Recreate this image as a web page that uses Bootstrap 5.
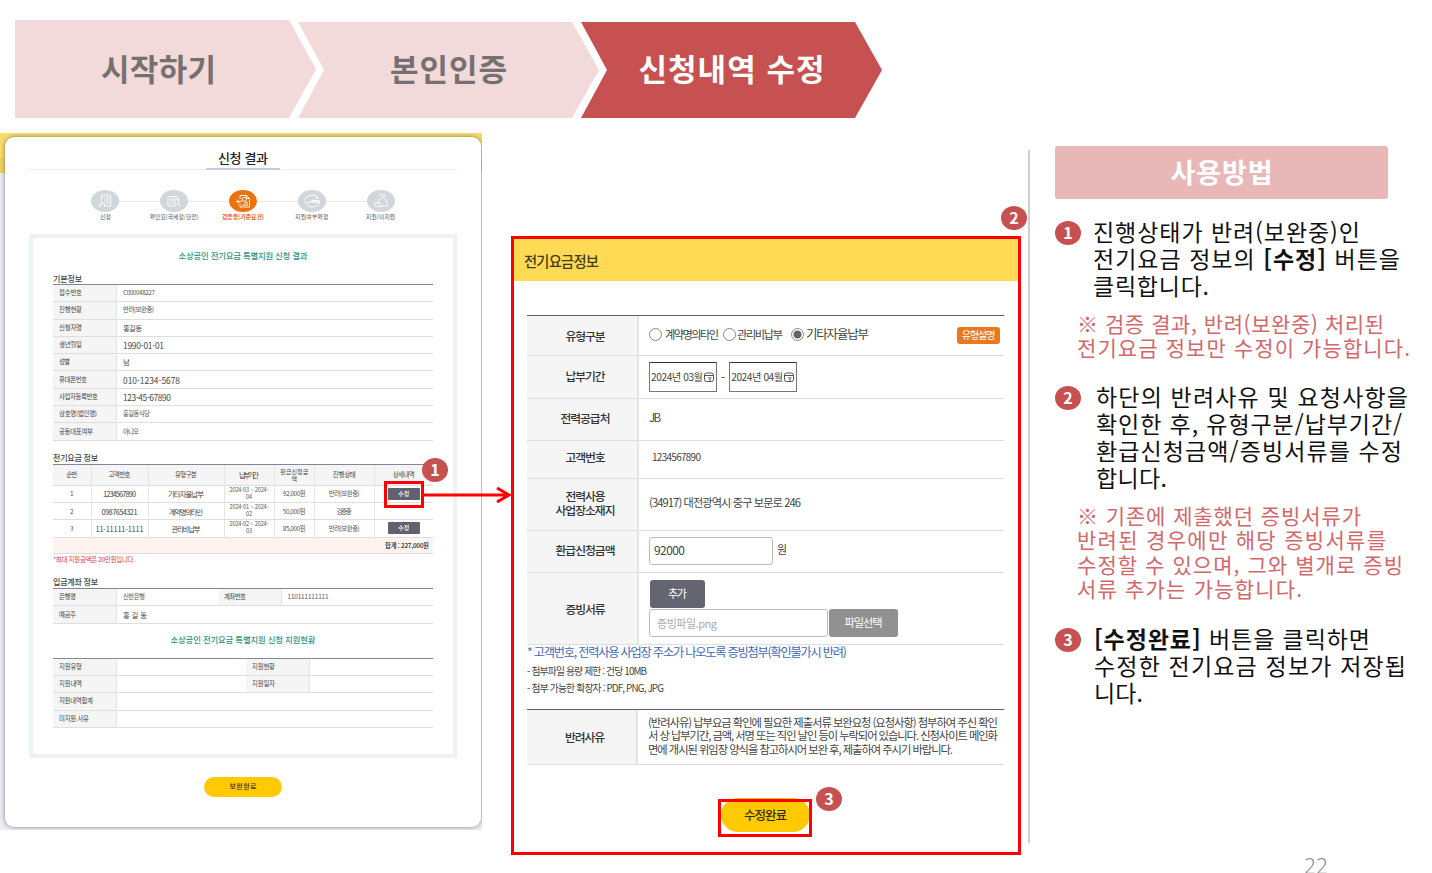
<!DOCTYPE html>
<html lang="ko">
<head>
  <meta charset="UTF-8" />
  <meta name="viewport" content="width=device-width, initial-scale=1" />
  <title>신청내역 수정</title>
  <link rel="stylesheet" href="https://cdn.jsdelivr.net/npm/bootstrap@5.3.3/dist/css/bootstrap.min.css" />
  <style>
    body {
      width: 1432px;
      height: 873px;
      overflow: hidden;
      background: #fff;
      color: #333;
      font-family: "Noto Sans CJK KR", sans-serif;
    }

    [data-w] {
      display: inline-block;
      white-space: nowrap;
    }

    /* top arrows */
    .flow-bar { height: 133px; padding: 20px 0 0 15px; }
    .flow-step {
      width: 301px;
      height: 96px;
      margin: 2px 0 0 -18px;
      padding-bottom: 4px;
      background: #f2dada;
      color: #767170;
      font-size: 31px;
      font-weight: 700;
      clip-path: polygon(0 0, 274px 0, 100% 50%, 274px 100%, 0 100%, 26px 50%);
    }
    .flow-step:first-child {
      height: 98px;
      margin: 0;
      padding-bottom: 2px;
      clip-path: polygon(0 0, 274px 0, 100% 50%, 274px 100%, 0 100%);
    }
    .flow-step.current { background: #c65150; color: #fff; }

    /* left window */
    .result-shot {
      width: 482px;
      height: 697px;
      padding: 4px 1px 0 5px;
      overflow: hidden;
      background: linear-gradient(#f9dc6a 0 25px, #efd05c 25px 40px, #ececf2 40px);
    }
    .result-card {
      height: 690px;
      padding: 0 24px;
      border-radius: 9px;
      background: #fff;
      box-shadow: 0 0 4px rgba(70, 60, 90, .65);
      font-size: 6.4px;
      line-height: 8px;
      color: #555;
    }
    .result-title {
      height: 33px;
      padding-top: 11px;
      border-bottom: 1px solid #eee;
      font-size: 13px;
      line-height: 19px;
      font-weight: 500;
      color: #222;
    }
    .result-title span { border-bottom: 2px solid #c3cddb; padding: 0 12px 1px; line-height: 20px; }
    .progress-steps { margin: 20px 42px 0 42px; position: relative; }
    .progress-steps::before {
      content: "";
      position: absolute;
      left: 34px;
      right: 34px;
      top: 11px;
      height: 1px;
      background: #e6e8ea;
    }
    .progress-item { flex: 1 1 0; position: relative; font-size: 5.8px; line-height: 7px; white-space: nowrap; }
    .progress-item svg { display: block; margin: 0 auto 1px; }
    .progress-item.on { color: #ed5a24; font-weight: 700; }
    .result-frame {
      height: 524px;
      margin-top: 14px;
      padding: 11px 20px 0;
      border: 4px solid #edf1f8;
    }
    .green-title { font-size: 8.4px; line-height: 12px; font-weight: 500; color: #2e9485; }
    .part-title { font-size: 8px; line-height: 11px; font-weight: 500; color: #444; }

    .grid-table {
      table-layout: fixed;
      border-collapse: separate;
      border-spacing: 0;
      margin: 0;
      border-top: 1.5px solid #85859a;
      color: #555;
    }
    .grid-table td, .grid-table th {
      padding: 0 0 0 6px;
      border-bottom: 1px solid #dedede;
      font-weight: 400;
      vertical-align: middle;
      box-shadow: none;
      background: none;
    }
    .grid-table th { background: #f5f5f5; border-right: 1px solid #e4e4e4; color: #444; }
    .grid-table tr { height: 17.3px; }
    .list-table td, .list-table th { padding: 0; text-align: center; border-right: 1px solid #e4e4e4; line-height: 7px; }
    .list-table td:last-child, .list-table th:last-child { border-right: 0; }
    .list-table .head-row { height: 21px; }
    .list-table .sum-row { height: 16.5px; }
    .list-table .sum-row td { background: #fff3f0; text-align: right; padding-right: 4px; color: #222; font-weight: 500; }
    .list-table .two-line { font-size: 6px; line-height: 7px; }
    .list-table .date-cell { font-size: 5.6px; line-height: 7px; }
    .grid-table .t8 { font-size: 8.4px; color: #444; }
    .grid-table .t7 { font-size: 7.4px; color: #444; }
    .btn-edit {
      display: block;
      width: 32px;
      height: 12px;
      margin: 0 auto;
      border-radius: 1px;
      background: #62626e;
      color: #fff;
      font-size: 6px;
      line-height: 12px;
      font-weight: 500;
    }
    .btn-yellow { border-radius: 50rem; background: #ffca04; color: #332c10; }

    /* centre form */
    .form-shot {
      width: 510px;
      height: 619px;
      margin: 103px 0 0 29px;
      border: 3px solid #f00;
      background: #fff;
      position: relative;
      font-size: 12px;
    }
    .form-head { height: 42px; padding-left: 10px; line-height: 44px; background: #ffdb55; color: #443c1c; font-size: 14.3px; font-weight: 500; }
    .form-inner { padding: 34px 14px 0 13px; }
    .form-grid { line-height: 14px; border-top-color: #5c5c78; color: #444; }
    .form-grid th { padding: 0 0 3px 7px; text-align: center; font-weight: 500; border-right-width: 2px; color: #333; font-size: 11.8px; }
    .form-grid td { padding-left: 10px; padding-bottom: 1px; }
    .radio-dot { width: 13px; height: 13px; border: 1px solid #888; border-radius: 50%; flex: none; }
    .radio-dot.on { background: radial-gradient(#666 0 3.6px, #fff 4.4px); }
    .month-box { width: 68px; height: 30px; border: 1px solid #777; border-top-color: #333; font-size: 10.2px; padding: 0 2px 0 1px; }
    .btn-type { background: #e8791f; color: #fff; width: 43px; height: 17px; border-radius: 3px; line-height: 16px; font-size: 10.4px; position: relative; top: 1px; }
    .in-box { border: 1px solid #bbb; border-radius: 3px; height: 28px; line-height: 24px; background: #fff; }
    .btn-dark-sm { width: 55px; height: 28px; line-height: 27px; border-radius: 3px; background: #656572; color: #fff; font-size: 11px; }
    .btn-file { width: 69px; height: 28px; line-height: 26px; border-radius: 3px; background: #919191; color: #fff; font-size: 11.2px; }
    .note-blue { font-size: 12.2px; line-height: 14px; color: #4169b8; }
    .note-line { font-size: 9.8px; line-height: 17px; color: #444; }

    /* guide column */
    .guide { width: 404px; margin: 17px 0 0 7px; padding-left: 25px; border-left: 2px solid #d0d0d0; height: 693px; }
    .guide-head { width: 333px; height: 53px; margin-top: -4px; border-radius: 3px; background: #e8b7b7; color: #fff; font-size: 27px; line-height: 51px; font-weight: 700; }
    .guide-item { font-size: 23px; line-height: 27px; color: #111; }
    .guide-item b { font-weight: 700; }
    .guide-item .num-badge { margin-top: 3px; }
    .guide-note { padding-left: 22px; font-size: 21px; line-height: 24.4px; color: #d2686a; }
    .num-badge {
      width: 26px;
      height: 24px;
      border-radius: 50%;
      background: #c65150;
      color: #fff;
      font-size: 16px;
      line-height: 23px;
      font-weight: 700;
      text-align: center;
      flex: none;
    }

    /* callouts drawn over the two windows */
    .over { position: absolute; z-index: 3; }
    .red-box { border: 3px solid #f00; }
    .page-no { position: absolute; left: 1304px; top: 854px; font: 300 21px/24px "Noto Sans", sans-serif; color: #8b8b8b; }
  </style>
</head>
<body>
  <header class="flow-bar d-flex align-items-start">
    <div class="flow-step d-flex align-items-center justify-content-center"><span data-w="115" style="margin-right:14px">시작하기</span></div>
    <div class="flow-step d-flex align-items-center justify-content-center"><span data-w="117">본인인증</span></div>
    <div class="flow-step current d-flex align-items-center justify-content-center"><span data-w="186">신청내역 수정</span></div>
  </header>

  <main class="d-flex align-items-start position-relative">
    <section class="result-shot">
      <div class="result-card">
        <div class="result-title text-center"><span><i class="fst-normal" data-w="50">신청 결과</i></span></div>

        <div class="progress-steps d-flex text-center">
          <div class="progress-item">
            <svg width="28" height="22" viewBox="0 0 28 22"><ellipse cx="14" cy="11" rx="14" ry="11" fill="#d1d6da"/><g fill="none" stroke="#fff" stroke-width=".9"><path d="M10.500 11V5h9v11h-5.500M12 7.500h1.500M15 7.500h3M13 10h5M15 12.500h3M8.500 17.500v-3.500l2-1.500 3 1v3.500M10.500 12.500v3"/></g></svg>
            <span data-w="11">신청</span>
          </div>
          <div class="progress-item">
            <svg width="28" height="22" viewBox="0 0 28 22"><ellipse cx="14" cy="11" rx="14" ry="11" fill="#d1d6da"/><g fill="none" stroke="#fff" stroke-width=".9"><path d="M16 16H8V6.500h9l1.500 1.500v2M10 9h5.500M10 11h3.500M10 13.500h3"/><circle cx="16.500" cy="12" r="2.500"/><path d="M18.300 14l2.700 2.500"/></g></svg>
            <span data-w="49">확인요(국세청/한전)</span>
          </div>
          <div class="progress-item on">
            <svg width="28" height="22" viewBox="0 0 28 22"><ellipse cx="14" cy="11" rx="14" ry="11" fill="#ec720f"/><g fill="none" stroke="#fff" stroke-width=".9"><path d="M11 9V5.500h6.500l3 3v8.500H11v-3.500M17.500 5.500v3h3M13 15h6M15 13h4"/><circle cx="15.200" cy="9.300" r="2"/><path d="M16.500 11l1.500 1.500M13.500 10.500l-3 1.500M7 11.500h4M9 9.700v3.600"/></g></svg>
            <span data-w="42">검증중(기준요건)</span>
          </div>
          <div class="progress-item">
            <svg width="28" height="22" viewBox="0 0 28 22"><ellipse cx="14" cy="11" rx="14" ry="11" fill="#d1d6da"/><g fill="none" stroke="#fff" stroke-width="1"><path d="M6.500 10.500c1.500-6 11.500-7 14-2.500h-3M21.500 12.500c-1 5-10.500 6-13.500 1.500M6.500 12.500h5l2-2h8v1.500h-8M13.500 12.500h7"/></g></svg>
            <span data-w="33">지원여부확정</span>
          </div>
          <div class="progress-item">
            <svg width="28" height="22" viewBox="0 0 28 22"><ellipse cx="14" cy="11" rx="14" ry="11" fill="#d1d6da"/><g fill="none" stroke="#fff" stroke-width=".9"><path d="M13 5h5l-1.500 2.500c2.500 2 5 6.500 3.500 8.500h-7M14.500 7.500c-2 1.500-3 3.500-3 5.500M14 7.500h3M7 13.500l3-1 4 2M7 15.500l4 1h4"/></g></svg>
            <span data-w="29">지원/미지원</span>
          </div>
        </div>

        <div class="result-frame">
          <div class="green-title text-center"><span data-w="129">소상공인 전기요금 특별지원 신청 결과</span></div>

          <div class="part-title" style="margin-top:12px"><span data-w="29">기본정보</span></div>
          <table class="table grid-table">
            <colgroup><col style="width:64px" /><col /></colgroup>
            <tr><th><span data-w="23">접수번호</span></th><td><span data-w="32">C000048227</span></td></tr>
            <tr><th><span data-w="23">진행현황</span></th><td><span data-w="31">반려(보완중)</span></td></tr>
            <tr><th><span data-w="23">신청자명</span></th><td class="t7"><span data-w="19">홍길동</span></td></tr>
            <tr><th><span data-w="23">생년월일</span></th><td class="t8"><span data-w="41">1990-01-01</span></td></tr>
            <tr><th><span data-w="11">성별</span></th><td class="t7">남</td></tr>
            <tr><th><span data-w="28">휴대폰번호</span></th><td class="t8"><span data-w="57">010-1234-5678</span></td></tr>
            <tr><th><span data-w="39">사업자등록번호</span></th><td class="t8"><span data-w="48">123-45-67890</span></td></tr>
            <tr><th><span data-w="38">상호명(법인명)</span></th><td><span data-w="27">홍길동식당</span></td></tr>
            <tr><th><span data-w="34">공동대표여부</span></th><td><span data-w="16">아니오</span></td></tr>
          </table>

          <div class="part-title" style="margin-top:11px;margin-bottom:1px"><span data-w="45">전기요금 정보</span></div>
          <table class="table grid-table list-table">
            <colgroup>
              <col style="width:38.5px" /><col style="width:57px" /><col style="width:76px" /><col style="width:50px" />
              <col style="width:40.5px" /><col style="width:59.5px" /><col />
            </colgroup>
            <tr class="head-row">
              <th><span data-w="11">순번</span></th><th><span data-w="22">고객번호</span></th><th><span data-w="22">유형구분</span></th>
              <th class="t7"><span data-w="20">납부기간</span></th><th class="two-line"><span data-w="28">환급신청금</span><br />액</th>
              <th><span data-w="23">진행상태</span></th><th><span data-w="22">상세내역</span></th>
            </tr>
            <tr>
              <td>1</td><td class="t7"><span data-w="33">1234567890</span></td><td class="t7"><span data-w="36">기타자율납부</span></td>
              <td class="date-cell"><span data-w="39">2024-03 ~ 2024-</span><br />04</td><td><span data-w="23">92,000원</span></td><td><span data-w="31">반려(보완중)</span></td>
              <td><span class="btn-edit"><span data-w="11">수정</span></span></td>
            </tr>
            <tr>
              <td>2</td><td class="t7"><span data-w="36">0987654321</span></td><td class="t7"><span data-w="34">계약명의타인</span></td>
              <td class="date-cell"><span data-w="39">2024-01 ~ 2024-</span><br />02</td><td><span data-w="23">50,000원</span></td><td><span data-w="15">검증중</span></td><td></td>
            </tr>
            <tr>
              <td>3</td><td class="t7"><span data-w="48">11-11111-1111</span></td><td class="t7"><span data-w="29">관리비납부</span></td>
              <td class="date-cell"><span data-w="39">2024-02 ~ 2024-</span><br />03</td><td><span data-w="23">85,000원</span></td><td><span data-w="31">반려(보완중)</span></td>
              <td><span class="btn-edit"><span data-w="11">수정</span></span></td>
            </tr>
            <tr class="sum-row"><td colspan="7"><span data-w="44">합계 : 227,000원</span></td></tr>
          </table>
          <div class="text-danger" style="margin-top:2px"><span data-w="82">*최대 지원금액은 20만원입니다.</span></div>

          <div class="part-title" style="margin-top:12px;margin-bottom:1px"><span data-w="45">입금계좌 정보</span></div>
          <table class="table grid-table">
            <colgroup><col style="width:64px" /><col style="width:101px" /><col style="width:63.5px" /><col /></colgroup>
            <tr><th><span data-w="17">은행명</span></th><td><span data-w="22">신한은행</span></td><th><span data-w="22">계좌번호</span></th><td><span data-w="41">110111111111</span></td></tr>
            <tr><th><span data-w="17">예금주</span></th><td colspan="3" class="t7"><span data-w="24">홍길동</span></td></tr>
          </table>

          <div class="green-title text-center" style="margin-top:9px"><span data-w="145">소상공인 전기요금 특별지원 신청 지원현황</span></div>
          <table class="table grid-table" style="margin-top:13px">
            <colgroup><col style="width:64px" /><col style="width:129px" /><col style="width:64px" /><col /></colgroup>
            <tr><th><span data-w="23">지원유형</span></th><td></td><th><span data-w="23">지원현황</span></th><td></td></tr>
            <tr><th><span data-w="23">지원내역</span></th><td></td><th><span data-w="23">지원일자</span></th><td></td></tr>
            <tr><th><span data-w="34">지원내역합계</span></th><td colspan="3"></td></tr>
            <tr><th><span data-w="30">미지원 사유</span></th><td colspan="3"></td></tr>
          </table>
        </div>

        <div class="btn-yellow text-center mx-auto" style="width:78px;height:20px;margin-top:19px;font-size:7px;line-height:19px;font-weight:500"><span data-w="27">보완완료</span></div>
      </div>
    </section>

    <section class="form-shot">
      <div class="form-head"><span data-w="75">전기요금정보</span></div>
      <div class="form-inner">
        <table class="table grid-table form-grid">
          <colgroup><col style="width:112px" /><col /></colgroup>
          <tr style="height:40px">
            <th style="padding-bottom:0"><span data-w="40">유형구분</span></th>
            <td>
              <div class="d-flex align-items-center" style="font-size:11.200px;margin-top:-2px">
                <i class="radio-dot"></i><span data-w="54" style="margin-left:3px">계약명의타인</span>
                <i class="radio-dot" style="margin-left:4px"></i><span data-w="46" style="margin-left:1px">관리비납부</span>
                <i class="radio-dot on" style="margin-left:8px"></i><span data-w="63" style="margin-left:2px;font-size:12.500px">기타자율납부</span>
                <span class="btn-type ms-auto me-1 text-center"><span data-w="34">유형설명</span></span>
              </div>
            </td>
          </tr>
          <tr style="height:43px">
            <th><span data-w="40">납부기간</span></th>
            <td>
              <div class="d-flex align-items-center" style="gap:4px">
                <div class="month-box d-flex align-items-center justify-content-between"><span data-w="52">2024년 03월</span><svg width="10" height="10" viewBox="0 0 10 10" fill="none" stroke="#555"><rect x=".5" y="1" width="9" height="8.500" rx="2"/><path d="M.5 3.500h9M4 6h3.500M5 8h2"/></svg></div>
                <span>-</span>
                <div class="month-box d-flex align-items-center justify-content-between"><span data-w="52">2024년 04월</span><svg width="10" height="10" viewBox="0 0 10 10" fill="none" stroke="#555"><rect x=".5" y="1" width="9" height="8.500" rx="2"/><path d="M.5 3.500h9M4 6h3.500M5 8h2"/></svg></div>
              </div>
            </td>
          </tr>
          <tr style="height:41.500px"><th><span data-w="50">전력공급처</span></th><td style="font-size:11.500px;padding-bottom:4px"><span data-w="12">JB</span></td></tr>
          <tr style="height:38px"><th style="padding-bottom:5px"><span data-w="40">고객번호</span></th><td style="font-size:10px;padding-bottom:4px"><span data-w="49" style="margin-left:3px">1234567890</span></td></tr>
          <tr style="height:52px"><th><span data-w="40">전력사용</span><br /><span data-w="60">사업장소재지</span></th><td style="font-size:11.200px;padding-bottom:4px"><span data-w="152">(34917) 대전광역시 중구 보문로 246</span></td></tr>
          <tr style="height:42.500px">
            <th><span data-w="60">환급신청금액</span></th>
            <td><div class="d-flex align-items-center"><div class="in-box" style="width:124px;padding-left:4px"><span data-w="31">92000</span></div><span style="margin-left:4px;font-size:11px;margin-top:-3px">원</span></div></td>
          </tr>
          <tr style="height:72px">
            <th style="padding-bottom:0"><span data-w="40">증빙서류</span></th>
            <td>
              <div class="btn-dark-sm text-center" style="margin-left:1px"><span data-w="19">추가</span></div>
              <div class="d-flex" style="margin-top:1px">
                <div class="in-box" style="width:179px;padding-left:7px;line-height:26px;color:#aaa"><span data-w="60" style="font-size:11px">증빙파일.png</span></div>
                <div class="btn-file text-center" style="margin-left:1px"><span data-w="38">파일선택</span></div>
              </div>
            </td>
          </tr>
        </table>
        <div class="note-blue"><span data-w="320">* 고객번호, 전력사용 사업장 주소가 나오도록 증빙첨부(확인불가시 반려)</span></div>
        <div class="note-line" style="margin-top:4px"><span data-w="120">- 첨부파일 용량 제한 : 건당 10MB</span></div>
        <div class="note-line"><span data-w="137">- 첨부 가능한 확장자 : PDF, PNG, JPG</span></div>
        <table class="table grid-table form-grid" style="margin-top:12px">
          <colgroup><col style="width:111px" /><col /></colgroup>
          <tr style="height:55px">
            <th style="padding-bottom:1px"><span data-w="40">반려사유</span></th>
            <td style="font-size:11.300px;line-height:13.500px;padding-bottom:2px">
              <span data-w="350">(반려사유) 납부요금 확인에 필요한 제출서류 보완요청 (요청사항) 첨부하여 주신 확인</span><br />
              <span data-w="350">서 상 납부기간, 금액, 서명 또는 직인 날인 등이 누락되어 있습니다. 신청사이트 메인화</span><br />
              <span data-w="305">면에 개시된 위임장 양식을 참고하시어 보완 후, 제출하여 주시기 바랍니다.</span>
            </td>
          </tr>
        </table>
        <div class="btn-yellow text-center mx-auto" style="width:89px;height:34px;margin-top:33px;line-height:34px;font-size:12.500px;font-weight:500"><span data-w="43">수정완료</span></div>
      </div>
      <div class="over red-box" style="left:204px;top:560px;width:94px;height:38px"></div>
      <div class="over num-badge" style="left:302px;top:548px">3</div>
      <div class="over num-badge" style="left:487px;top:-33px">2</div>
    </section>

    <aside class="guide">
      <div class="guide-head text-center"><span data-w="102">사용방법</span></div>

      <div class="guide-item d-flex" style="margin-top:19px">
        <span class="num-badge">1</span>
        <div style="margin-left:12px">
          <span data-w="267">진행상태가 반려(보완중)인</span><br />
          <span data-w="307">전기요금 정보의 <b>[수정]</b> 버튼을</span><br />
          <span data-w="116">클릭합니다.</span>
        </div>
      </div>
      <div class="guide-note" style="margin-top:12px">
        <span data-w="307">※ 검증 결과, 반려(보완중) 처리된</span><br />
        <span data-w="333">전기요금 정보만 수정이 가능합니다.</span>
      </div>

      <div class="guide-item d-flex" style="margin-top:23px">
        <span class="num-badge">2</span>
        <div style="margin-left:15px">
          <span data-w="312">하단의 반려사유 및 요청사항을</span><br />
          <span data-w="306">확인한 후, 유형구분/납부기간/</span><br />
          <span data-w="306">환급신청금액/증빙서류를 수정</span><br />
          <span data-w="71">합니다.</span>
        </div>
      </div>
      <div class="guide-note" style="margin-top:12px">
        <span data-w="284">※ 기존에 제출했던 증빙서류가</span><br />
        <span data-w="309">반려된 경우에만 해당 증빙서류를</span><br />
        <span data-w="326">수정할 수 있으며, 그와 별개로 증빙</span><br />
        <span data-w="225">서류 추가는 가능합니다.</span>
      </div>

      <div class="guide-item d-flex" style="margin-top:25px">
        <span class="num-badge">3</span>
        <div style="margin-left:13px">
          <span data-w="276"><b>[수정완료]</b> 버튼을 클릭하면</span><br />
          <span data-w="312">수정한 전기요금 정보가 저장됩</span><br />
          <span data-w="49">니다.</span>
        </div>
      </div>
    </aside>

    <div class="over red-box" style="left:384px;top:348px;width:40px;height:27px"></div>
    <div class="over num-badge" style="left:422px;top:325px">1</div>
    <svg class="over" style="left:423px;top:352px" width="90" height="20" viewBox="0 0 90 20" fill="none" stroke="#f00" stroke-width="3"><path d="M0 10h86M74 3l12 7-12 7"/></svg>
  </main>
  <div class="page-no">22</div>

  <script src="https://cdn.jsdelivr.net/npm/bootstrap@5.3.3/dist/js/bootstrap.bundle.min.js"></script>
  <script>
    // Spread the letters of each label over the width given in data-w
    document.querySelectorAll("[data-w]").forEach((el) => {
      const count = el.textContent.length;
      const natural = el.getBoundingClientRect().width;
      const gap = (Number(el.dataset.w) - natural) / (count - 1);
      el.style.letterSpacing = gap + "px";
      el.style.marginRight = (parseFloat(getComputedStyle(el).marginRight) - gap) + "px";
    });
  </script>
</body>
</html>
